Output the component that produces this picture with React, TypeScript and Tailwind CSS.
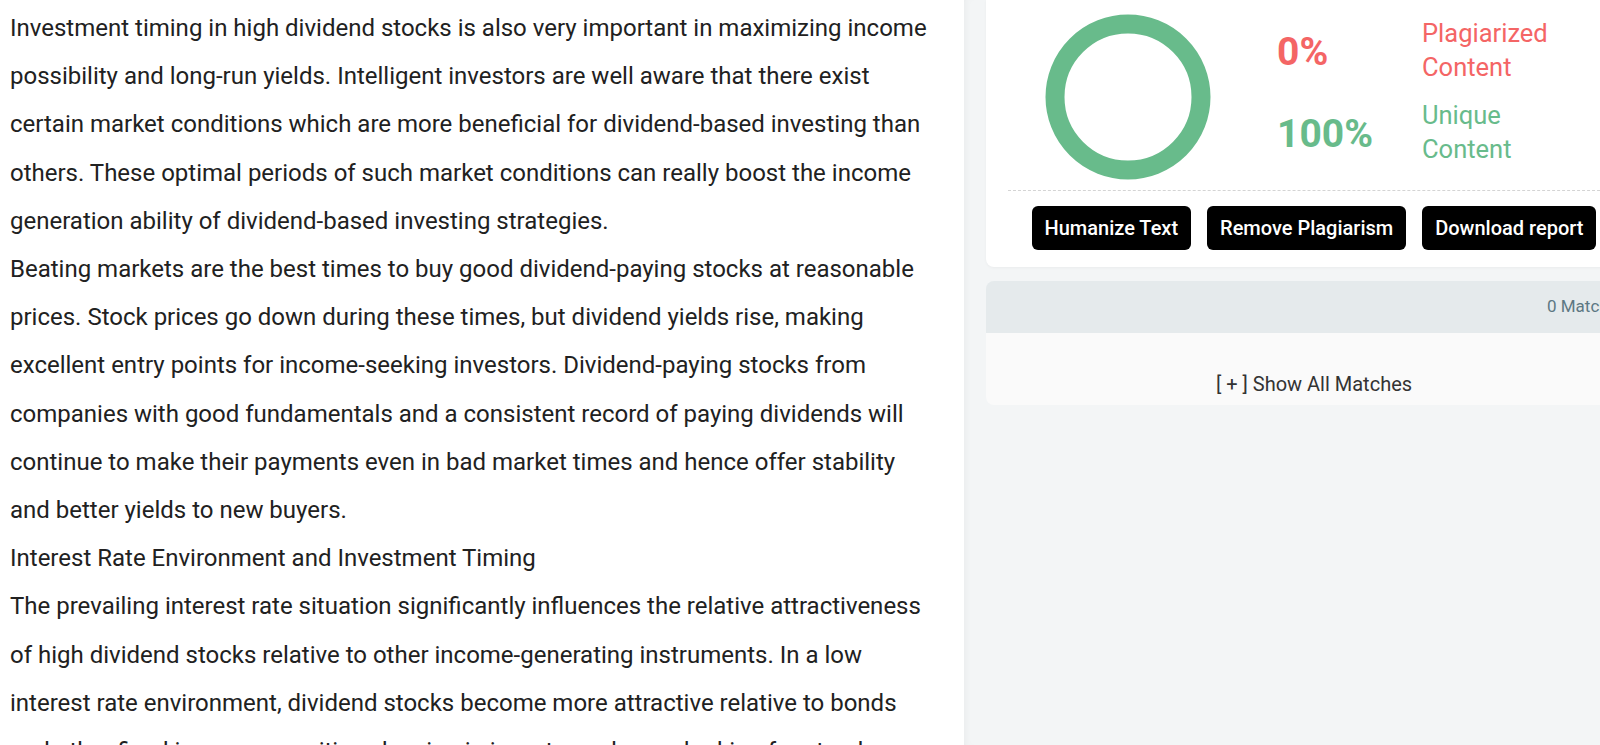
import React from "react";

const paragraphs = [
  "Investment timing in high dividend stocks is also very important in maximizing income possibility and long-run yields. Intelligent investors are well aware that there exist certain market conditions which are more beneficial for dividend-based investing than others. These optimal periods of such market conditions can really boost the income generation ability of dividend-based investing strategies.",
  "Beating markets are the best times to buy good dividend-paying stocks at reasonable prices. Stock prices go down during these times, but dividend yields rise, making excellent entry points for income-seeking investors. Dividend-paying stocks from companies with good fundamentals and a consistent record of paying dividends will continue to make their payments even in bad market times and hence offer stability and better yields to new buyers.",
  "Interest Rate Environment and Investment Timing",
  "The prevailing interest rate situation significantly influences the relative attractiveness of high dividend stocks relative to other income-generating instruments. In a low interest rate environment, dividend stocks become more attractive relative to bonds and other fixed income securities, drawing in investors who are looking for steady income.",
];

function Donut() {
  return (
    <svg width="166" height="166" viewBox="0 0 166 166" className="shrink-0">
      <circle cx="83" cy="83" r="73" fill="none" stroke="#68bb8b" strokeWidth="19" />
    </svg>
  );
}

export default function App() {
  return (
    <div className="flex w-[1600px] h-[745px] overflow-hidden bg-white font-['Roboto',sans-serif]">
      <div className="w-[964px] shrink-0 pl-[10px] pr-[30px] pt-[4px] text-[24px] leading-[48.2px] text-[#212121]">
        {paragraphs.map((p, i) => (
          <p key={i}>{p}</p>
        ))}
      </div>

      <div className="flex-1 bg-[#f3f5f6] pl-[22px] shadow-[inset_6px_0_8px_-6px_rgba(0,0,0,0.06)]">
        <div className="w-[656px]">
          <div className="bg-white rounded-b-lg pt-[14px] pb-[17px] shadow-[0_1px_3px_rgba(0,0,0,0.04)]">
            <div className="flex items-start pl-[59px]">
              <Donut />
              <div className="ml-[66px] mt-[3px] flex flex-col gap-[15px]">
                <div className="flex items-center">
                  <div className="w-[145px] pt-[3px] text-[39px] font-bold text-[#f46565]">0%</div>
                  <div className="text-[25.5px] leading-[33.5px] text-[#f46565]">
                    Plagiarized
                    <br />
                    Content
                  </div>
                </div>
                <div className="flex items-center">
                  <div className="w-[145px] pt-[3px] text-[39px] font-bold text-[#68bb8b]">100%</div>
                  <div className="text-[25.5px] leading-[33.5px] text-[#68bb8b]">
                    Unique
                    <br />
                    Content
                  </div>
                </div>
              </div>
            </div>

            <div className="mx-[22px] mt-[10px] border-t border-dashed border-[#d4d4d4]" />

            <div className="mt-[15px] flex justify-center gap-4">
              <button className="h-[44px] px-[13px] rounded-md bg-black text-white text-[20px] font-medium">
                Humanize Text
              </button>
              <button className="h-[44px] px-[13px] rounded-md bg-black text-white text-[20px] font-medium">
                Remove Plagiarism
              </button>
              <button className="h-[44px] px-[13px] rounded-md bg-black text-white text-[20px] font-medium">
                Download report
              </button>
            </div>
          </div>

          <div className="mt-[14px] rounded-lg overflow-hidden">
            <div className="h-[52px] bg-[#e5eaec] flex items-center pl-[561px] whitespace-nowrap text-[17px] text-[#5d7883]">
              0 Matches Found
            </div>
            <div className="h-[72px] bg-[#fafafa] flex items-end justify-center pb-[6px] text-[20px] text-[#333]">
              [ + ] Show All Matches
            </div>
          </div>
        </div>
      </div>
    </div>
  );
}
